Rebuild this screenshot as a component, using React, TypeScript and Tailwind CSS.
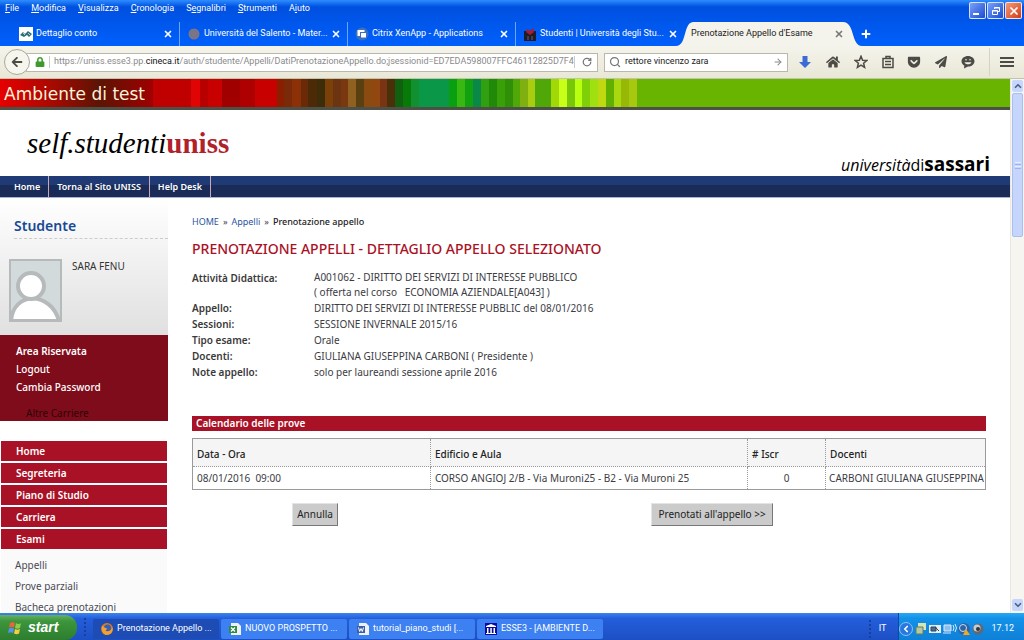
import { ArrowRight, ChevronDown, ChevronLeft, ChevronUp, Plus, RotateCw, Search, X } from "lucide-react";
import { FaArrowLeft, FaGetPocket, FaHome, FaLock, FaPaperPlane } from "react-icons/fa";
import type { ReactNode } from "react";

const MENUS = ["File", "Modifica", "Visualizza", "Cronologia", "Segnalibri", "Strumenti", "Aiuto"];
const ACCEL = [0, 0, 0, 0, 1, 0, 1];

// start x and colour of every band in the banner
const BANDS: [number, string][] = [
  [153, "#c00000"], [191, "#e00404"], [200, "#b80000"], [208, "#c80000"], [222, "#a00000"],
  [240, "#ae0000"], [255, "#c80000"], [277, "#8a1e00"], [284, "#7a2a08"], [292, "#8c3008"],
  [301, "#6a2a08"], [308, "#4c2a08"], [317, "#3c2c08"], [325, "#7a4008"], [333, "#6c3410"],
  [341, "#7a3810"], [348, "#8f6020"], [356, "#5a4010"], [364, "#8a4a10"], [372, "#904810"],
  [380, "#7a3414"], [387, "#4a3008"], [395, "#106010"], [403, "#087a08"], [411, "#109030"],
  [419, "#0a9848"], [449, "#08a010"], [457, "#38b810"], [465, "#10a010"], [473, "#0a8848"],
  [481, "#30a010"], [489, "#208a08"], [497, "#3aa008"], [505, "#2f9008"], [513, "#50a808"],
  [520, "#80b010"], [528, "#a8cc10"], [535, "#50a808"], [551, "#a0d808"], [559, "#c8ff18"],
  [567, "#78c808"], [575, "#b8ff10"], [582, "#80d008"], [590, "#a0e010"], [598, "#c0d810"],
  [606, "#60b000"], [614, "#a8d810"], [621, "#98b808"], [629, "#a8c810"], [637, "#69b400"],
];

const DETAILS: [string, ReactNode][] = [
  ["Appello:", "DIRITTO DEI SERVIZI DI INTERESSE PUBBLIC del 08/01/2016"],
  ["Sessioni:", "SESSIONE INVERNALE 2015/16"],
  ["Tipo esame:", "Orale"],
  ["Docenti:", "GIULIANA GIUSEPPINA CARBONI ( Presidente )"],
  ["Note appello:", "solo per laureandi sessione aprile 2016"],
];

function BankIcon() {
  return (
    <svg className="size-3.5 shrink-0" viewBox="0 0 14 14">
      <rect width="14" height="14" fill="#fff" />
      <path d="M1 8l3-3 2 2 3-3 4 3-3 3-2-2-3 2z" fill="#2d6f78" />
      <path d="M4 6l2 2M9 6l2 2" stroke="#b9d4cf" />
    </svg>
  );
}

function SalentoIcon() {
  return (
    <svg className="size-3.5 shrink-0" viewBox="0 0 14 14">
      <circle cx="7" cy="7" r="5.5" fill="#7f7480" />
      <circle cx="7" cy="7" r="3" fill="none" stroke="#6678a0" />
    </svg>
  );
}

function CitrixIcon() {
  return (
    <svg className="size-3.5 shrink-0" viewBox="0 0 14 14">
      <circle cx="7" cy="7" r="6.5" fill="#3c6fc0" />
      <rect x="2.5" y="3" width="7" height="6" fill="#fff" />
      <rect x="5.5" y="5.5" width="6" height="5.5" fill="#fff" stroke="#3c6fc0" />
    </svg>
  );
}

function UnissIcon() {
  return (
    <svg className="size-3.5 shrink-0" viewBox="0 0 14 14">
      <path d="M1 4h12v10H1z" fill="#1d1c2c" />
      <path d="M3 5l1-3 3 2 3-3 1 4-4 3z" fill="#a81c30" />
      <path d="M4 9h2v4H4zM8 9h2v4H8z" fill="#4a3a4a" />
    </svg>
  );
}

const TABS: { title: string; icon: ReactNode }[] = [
  { title: "Dettaglio conto", icon: <BankIcon /> },
  { title: "Università del Salento - Mater...", icon: <SalentoIcon /> },
  { title: "Citrix XenApp - Applications", icon: <CitrixIcon /> },
  { title: "Studenti | Università degli Stu...", icon: <UnissIcon /> },
];

function TitleBar() {
  return (
    <header className="flex h-[46px] flex-col bg-gradient-to-b from-[#2f8cff] via-[#0050e0] via-15% to-[#0060fc] font-[Roboto,sans-serif] text-white">
      <div className="flex h-[22px] shrink-0 items-start justify-between">
        <nav className="flex gap-3 pl-[5px] pt-0.5 text-[9px] leading-3">
          {MENUS.map((m, i) => (
            <button key={m} type="button">
              {m.slice(0, ACCEL[i])}
              <u>{m[ACCEL[i]]}</u>
              {m.slice(ACCEL[i] + 1)}
            </button>
          ))}
        </nav>
        <div className="flex gap-px pr-0.5 pt-0.5">
          <button type="button" aria-label="Riduci" className="flex size-[17px] items-end rounded-xs border border-white/80 bg-gradient-to-br from-[#7aa0f8] to-[#1c48d0] p-[3px]">
            <span className="h-0.5 w-1.5 bg-white" />
          </button>
          <button type="button" aria-label="Ripristina" className="flex size-[17px] items-center justify-center rounded-xs border border-white/80 bg-gradient-to-br from-[#7aa0f8] to-[#1c48d0]">
            <svg className="size-2.5" viewBox="0 0 10 10" fill="none" stroke="#fff">
              <path d="M3.5 3V1.5h5v4H7M1.500 4.500h5v4h-5zM1.500 5h5M3.500 2h5" />
            </svg>
          </button>
          <button type="button" aria-label="Chiudi" className="flex size-[17px] items-center justify-center rounded-xs border border-white/80 bg-gradient-to-br from-[#f09878] to-[#d03808]">
            <X className="size-3" strokeWidth={3.5} />
          </button>
        </div>
      </div>
      <div className="flex h-6 items-stretch pl-3">
        {TABS.map((t, i) => (
          <div key={t.title} className={`flex w-[168px] items-center gap-[3px] pl-[7px] pr-1.5 text-[9px] ${i < 3 ? "border-r border-[#6ba6ff]" : ""}`}>
            {t.icon}
            <span className="flex-1 whitespace-nowrap">{t.title}</span>
            <button type="button" aria-label="Chiudi scheda">
              <X className="size-2.5" strokeWidth={4} />
            </button>
          </div>
        ))}
        <div className="relative flex w-[170px] items-center pl-[7px] pr-2.5 text-[9px] text-[#222]">
          <svg className="absolute -left-2 top-0 h-full w-[186px]" viewBox="0 0 186 24" preserveAspectRatio="none">
            <path d="M0 24C11 24 7 1 17 0H167C179 0 175 24 186 24Z" fill="#f5f4ec" />
          </svg>
          <span className="relative flex-1 whitespace-nowrap">Prenotazione Appello d'Esame</span>
          <button type="button" aria-label="Chiudi scheda" className="relative text-[#777]">
            <X className="size-2.5" strokeWidth={4} />
          </button>
        </div>
        <button type="button" aria-label="Nuova scheda" className="pl-1.5">
          <Plus className="size-3" strokeWidth={4} />
        </button>
      </div>
    </header>
  );
}

function NavBar() {
  return (
    <div className="flex h-[33px] items-center border-b border-[#c4c2b0] bg-gradient-to-b from-[#f5f4ec] to-[#e9e7d6] font-[Roboto,sans-serif] text-[9px]">
      <button type="button" aria-label="Indietro" className="relative ml-1 flex size-[26px] shrink-0 items-center justify-center rounded-full border border-[#aaa99c] bg-[#f6f5ee] text-[#4c4b45]">
        <FaArrowLeft className="size-3" />
      </button>
      <div className="-ml-1 flex h-[19px] w-[572px] items-center border border-[#b9b8ab] bg-white pl-2">
        <FaLock className="size-2.5 shrink-0 text-[#3e9a2c]" />
        <span className="ml-1 h-3 border-l border-[#ccc]" />
        <div className="ml-1 flex-1 whitespace-nowrap text-[#8a8a8a]">
          https://uniss.esse3.pp.<span className="text-[#111]">cineca.it</span>
          /auth/studente/Appelli/DatiPrenotazioneAppello.do;jsessionid=ED7EDA598007FFC46112825D7F4
        </div>
        <button type="button" aria-label="Ricarica" className="flex h-3 w-[26px] shrink-0 items-center justify-center border-l border-[#ccc] text-[#777]">
          <RotateCw className="size-2.5" strokeWidth={3} />
        </button>
      </div>
      <label className="ml-1.5 flex h-[19px] w-[184px] items-center gap-1 border border-[#b9b8ab] bg-white px-1">
        <Search className="size-3 text-[#777]" strokeWidth={2.5} />
        <input aria-label="Cerca" defaultValue="rettore vincenzo zara" className="min-w-0 flex-1 text-[#222] outline-none" />
        <ArrowRight className="size-2.5 text-[#888]" strokeWidth={2.5} />
      </label>
      <div className="flex flex-1 items-center justify-between pl-2.5 pr-2.5 text-[#4c4b45]">
        <button type="button" aria-label="Download" className="text-[#3a6cd4]">
          <svg className="size-3.5" viewBox="0 0 14 14" fill="currentColor">
            <path d="M4.500 1h5v6H13l-6 6-6-6h3.500z" />
          </svg>
        </button>
        <button type="button" aria-label="Home"><FaHome className="size-3.5" /></button>
        <button type="button" aria-label="Preferiti">
          <svg className="size-3.5" viewBox="0 0 14 14" fill="none" stroke="currentColor" strokeWidth="1.500">
            <path d="M7 1.300l1.600 3.900 4.200.3-3.200 2.700 1 4.100L7 10.100l-3.600 2.200 1-4.100L1.200 5.500l4.200-.3z" />
          </svg>
        </button>
        <button type="button" aria-label="Segnalibri">
          <svg className="h-3.5 w-3" viewBox="0 0 12 14" fill="none" stroke="currentColor" strokeWidth="1.500">
            <path d="M1 3.500h10v9H1zM4 3.500v-2h4v2M3 6.500h6M3 9.500h6" />
          </svg>
        </button>
        <button type="button" aria-label="Pocket"><FaGetPocket className="size-3.5" /></button>
        <button type="button" aria-label="Condividi"><FaPaperPlane className="size-3" /></button>
        <button type="button" aria-label="Chat">
          <svg className="size-3.5" viewBox="0 0 14 14">
            <path d="M7 1c3.600 0 6.500 2.300 6.500 5.300S10.600 11.600 7 11.600L3 13.500l.3-2.800C1.600 9.700.5 8 .5 6.300.5 3.300 3.400 1 7 1z" fill="currentColor" />
            <path d="M3.500 7.200c1 2.700 6 2.700 7 0z" fill="#f0efe4" />
            <circle cx="5" cy="4.700" r=".8" fill="#f0efe4" />
            <circle cx="9" cy="4.700" r=".8" fill="#f0efe4" />
          </svg>
        </button>
        <button type="button" aria-label="Menu" className="border-l border-[#d5d3c4] py-2 pl-2.5">
          <svg className="h-3 w-3.5" viewBox="0 0 14 12" fill="currentColor">
            <path d="M0 1h14v2H0zM0 5h14v2H0zM0 9h14v2H0z" />
          </svg>
        </button>
      </div>
    </div>
  );
}

function Banner() {
  return (
    <div className="relative h-[31px] shrink-0 border-b-3 border-[#4c5046] bg-[#69b400]">
      <svg className="absolute left-0 top-0 h-7 w-[638px]" viewBox="0 0 638 28" preserveAspectRatio="none">
        <defs>
          <linearGradient id="glow">
            <stop offset="0" stopColor="#e60000" />
            <stop offset=".3" stopColor="#b00800" />
            <stop offset=".65" stopColor="#5c1404" />
            <stop offset="1" stopColor="#a00000" />
          </linearGradient>
        </defs>
        <rect width="153" height="28" fill="url(#glow)" />
        {BANDS.slice(0, -1).map(([x, c], i) => (
          <rect key={x} x={x} width={BANDS[i + 1][0] - x} height="28" fill={c} />
        ))}
      </svg>
      <p className="relative pl-1 font-[DejaVu_Sans,sans-serif] text-[17px] leading-[30px] text-[#fbf3dc]">Ambiente di test</p>
    </div>
  );
}

function Sidebar() {
  return (
    <aside className="w-[168px] shrink-0">
      <div className="h-[137px] bg-gradient-to-b from-white to-[#e0e0e0] pt-[18px]">
        <h2 className="ml-3.5 border-b border-dashed border-[#ccc] pb-0.5 text-[14px] font-semibold leading-5 text-[#174a94]">Studente</h2>
        <div className="flex gap-2.5 pl-[9px] pt-5">
          <svg className="h-[63px] w-[53px]" viewBox="0 0 53 63">
            <rect x="1" y="1" width="51" height="61" fill="#d3dadb" stroke="#b6baba" strokeWidth="2" />
            <path d="M2 62C4 32 42 32 50 62z" fill="#fff" stroke="#b6baba" strokeWidth="4" />
            <circle cx="22" cy="27" r="13" fill="#fff" stroke="#b6baba" strokeWidth="4" />
            <path d="M1 62h51" stroke="#b6baba" strokeWidth="2" />
          </svg>
          <p className="text-[10px] leading-[14px] text-[#333]">SARA FENU</p>
        </div>
      </div>
      <nav className="flex h-[86px] flex-col items-start bg-[#7f0c1b] pl-4 pt-[7px] text-[10px] font-medium leading-[18px] text-white">
        <a href="#area" className="font-semibold">Area Riservata</a>
        <a href="#logout">Logout</a>
        <a href="#password">Cambia Password</a>
        <a href="#carriere" className="pl-2.5 pt-2 font-normal text-[#2e0408]">Altre Carriere</a>
      </nav>
      <nav className="mt-5 flex flex-col gap-0.5 px-px text-[10px] font-semibold leading-5 text-white">
        {["Home", "Segreteria", "Piano di Studio", "Carriera", "Esami"].map((s) => (
          <a key={s} href="#sezione" className="bg-[#a91226] pl-[15px]">{s}</a>
        ))}
      </nav>
      <nav className="mx-px flex flex-col bg-[#fafafa] pl-3.5 pt-1.5 text-[10px] leading-[21px] text-[#4a4a55]">
        {["Appelli", "Prove parziali", "Bacheca prenotazioni"].map((s) => (
          <a key={s} href="#voce">{s}</a>
        ))}
      </nav>
    </aside>
  );
}

function Main() {
  return (
    <main className="min-w-0 flex-1 pl-6 pr-6 pt-4 text-[10px] text-[#3c3c44]">
      <nav className="flex gap-1 text-[9px] leading-4">
        <a href="#home" className="text-[#2a55a0]">HOME</a>
        <span>»</span>
        <a href="#appelli" className="text-[#2a55a0]">Appelli</a>
        <span>»</span>
        <span className="font-medium text-[#222]">Prenotazione appello</span>
      </nav>
      <h1 className="mt-[9px] text-[14px] font-medium leading-5 text-[#a91226]">PRENOTAZIONE APPELLI - DETTAGLIO APPELLO SELEZIONATO</h1>
      <dl className="mt-[11px] grid grid-cols-[122px_1fr] leading-4">
        <dt className="font-semibold text-[#3a3a3a]">Attività Didattica:</dt>
        <dd className="leading-[15px]">
          A001062 - DIRITTO DEI SERVIZI DI INTERESSE PUBBLICO
          <br />( offerta nel corso &nbsp; ECONOMIA AZIENDALE[A043] )
        </dd>
        {DETAILS.map(([k, v]) => [
          <dt key={k} className="font-semibold text-[#3a3a3a]">{k}</dt>,
          <dd key={k + "v"}>{v}</dd>,
        ])}
      </dl>
      <h2 className="mt-9 bg-[#a91226] pl-1 font-semibold leading-[15px] text-white">Calendario delle prove</h2>
      <table className="mt-[7px] w-full table-fixed border-collapse border border-[#9a9a9a] text-left">
        <colgroup>
          <col className="w-[30%]" />
          <col className="w-[40%]" />
          <col className="w-[78px]" />
          <col />
        </colgroup>
        <thead>
          <tr className="h-7 bg-[#f5f5f5] text-[#222]">
            {["Data - Ora", "Edificio e Aula", "# Iscr", "Docenti"].map((h) => (
              <th key={h} className="border border-dotted border-[#9a9a9a] px-1 pt-1 font-medium">{h}</th>
            ))}
          </tr>
        </thead>
        <tbody>
          <tr className="h-[23px] whitespace-nowrap">
            <td className="border border-dotted border-[#9a9a9a] px-1">08/01/2016 &nbsp;09:00</td>
            <td className="border border-dotted border-[#9a9a9a] px-1">CORSO ANGIOJ 2/B - Via Muroni25 - B2 - Via Muroni 25</td>
            <td className="border border-dotted border-[#9a9a9a] px-1 text-center">0</td>
            <td className="border border-dotted border-[#9a9a9a] pl-[3px]">CARBONI GIULIANA GIUSEPPINA</td>
          </tr>
        </tbody>
      </table>
      <div className="mt-[13px] grid grid-cols-[31%_69%] text-[#222]">
        <div className="flex justify-center">
          <button type="button" className="h-[23px] border border-t-[#e4e4e4] border-r-[#777] border-b-[#777] border-l-[#e4e4e4] bg-[#cbcbcb] px-1">Annulla</button>
        </div>
        <div className="flex justify-center">
          <button type="button" className="h-[23px] border border-t-[#e4e4e4] border-r-[#777] border-b-[#777] border-l-[#e4e4e4] bg-[#cbcbcb] px-1.5">Prenotati all'appello &gt;&gt;</button>
        </div>
      </div>
    </main>
  );
}

function Scrollbar() {
  return (
    <div className="flex w-3.5 shrink-0 flex-col border-l border-[#e8e8e0] bg-[#f6f5f0]">
      <div className="m-px flex h-3 shrink-0 items-center justify-center rounded-xs bg-[#c6d6fc] text-[#4d6185]">
        <ChevronUp className="size-2.5" strokeWidth={4} />
      </div>
      <div className="mx-px flex h-[144px] flex-col items-center justify-center gap-px rounded-xs border border-[#a9bff2] bg-[#c6d5fb]">
        <span className="h-px w-1.5 bg-[#e8effe]" />
        <span className="h-px w-1.5 bg-[#9db4ec]" />
        <span className="h-px w-1.5 bg-[#e8effe]" />
        <span className="h-px w-1.5 bg-[#9db4ec]" />
      </div>
      <div className="mx-px mt-auto mb-0.5 flex h-3 shrink-0 items-center justify-center rounded-xs bg-[#c6d6fc] text-[#4d6185]">
        <ChevronDown className="size-2.5" strokeWidth={4} />
      </div>
    </div>
  );
}

function FirefoxIcon() {
  return (
    <svg className="size-3 shrink-0" viewBox="0 0 12 12">
      <circle cx="6" cy="6" r="6" fill="#e8761c" />
      <circle cx="6.500" cy="5" r="3.500" fill="#2f62b8" />
      <path d="M1 3c2 0 2 2 4 2 1 0 1 2 0 2s0 2 3 1 3-3 3-4c2 5-2 8-5 8S0 9 1 3z" fill="#f2a030" />
    </svg>
  );
}

function DocIcon({ kind }: { kind: "excel" | "word" }) {
  return (
    <svg className="size-3 shrink-0" viewBox="0 0 12 12">
      <path d="M2 0h7l3 3v9H2z" fill="#eef2f6" />
      <rect y="3" width="8" height="7" fill={kind === "excel" ? "#2f8a45" : "#3a5ea8"} />
      {kind === "excel" ? (
        <path d="M2 4.500l4 4M6 4.500l-4 4" stroke="#fff" strokeWidth="1.300" />
      ) : (
        <path d="M1.500 4.500l1.200 4L4 5.500l1.300 3 1.200-4" fill="none" stroke="#fff" />
      )}
    </svg>
  );
}

function TempleIcon() {
  return (
    <svg className="size-3 shrink-0" viewBox="0 0 12 12">
      <rect width="12" height="12" fill="#0a0a9c" />
      <path d="M1 3l5-2 5 2v1H1zM2 5h1.500v5H2zM5.300 5h1.500v5H5.300zM8.500 5H10v5H8.500zM1 10h10v1H1z" fill="#fff" />
    </svg>
  );
}

function Taskbar() {
  const windows = [
    { title: "Prenotazione Appello ...", icon: <FirefoxIcon /> },
    { title: "NUOVO PROSPETTO ...", icon: <DocIcon kind="excel" /> },
    { title: "tutorial_piano_studi [...", icon: <DocIcon kind="word" /> },
    { title: "ESSE3 - [AMBIENTE D...", icon: <TempleIcon /> },
  ];
  return (
    <footer className="flex h-[27px] shrink-0 items-stretch bg-gradient-to-b from-[#3d84ec] via-[#245edb] via-20% to-[#1d4fc4] font-[Roboto,sans-serif] text-[9px] text-white">
      <button type="button" className="mt-0.5 flex w-[77px] items-center gap-1.5 rounded-r-xl bg-gradient-to-b from-[#63b163] via-[#3c963c] via-25% to-[#2d7d2e] pl-2 font-['Liberation_Sans',sans-serif] text-[14px] font-bold italic">
        <svg className="size-3.5" viewBox="0 0 14 14">
          <path d="M2 2c2-1 3-1 5 0L6 6.500c-2-1-3-1-5 0z" fill="#f0623a" />
          <path d="M8 2.300c2 1 3 1 5 0L12 7c-2 1-3 1-5 0z" fill="#8ccc50" />
          <path d="M1 7.500c2-1 3-1 5 0L5 12c-2-1-3-1-5 0z" fill="#5a90f0" />
          <path d="M7 8c2 1 3 1 5 0l-1 4.500c-2 1-3 1-5 0z" fill="#f8cc40" />
        </svg>
        start
      </button>
      <div className="flex w-4 items-center justify-center">
        <span className="h-[18px] border-l-2 border-dotted border-[#173f9c]" />
      </div>
      <div className="flex flex-1 gap-0.5 pt-1.5">
        {windows.map((w, i) => (
          <button key={w.title} type="button" className={`flex h-5 w-[126px] items-center gap-1 rounded-xs pl-2 ${i === 0 ? "bg-[#1c4cb4]" : "bg-[#3c80f2]"}`}>
            {w.icon}
            <span className="whitespace-nowrap">{w.title}</span>
          </button>
        ))}
      </div>
      <div className="flex items-center gap-2 pr-3 pt-1">
        <span className="h-[18px] border-l-2 border-dotted border-[#173f9c]" />
        IT
      </div>
      <div className="flex items-center gap-0.5 border-l border-[#0d4a9c] bg-gradient-to-b from-[#28a8f4] via-[#1391e8] via-20% to-[#0f80d8] pr-2.5 pt-1">
        <button type="button" aria-label="Mostra icone" className="flex size-3.5 items-center justify-center rounded-full border border-[#8cc4f8] bg-[#2878e0]">
          <ChevronLeft className="size-2.5" strokeWidth={4} />
        </button>
        <svg className="h-3.5 w-[70px]" viewBox="0 0 70 14">
          <path d="M3 1h8v7H3z" fill="#d8e4b8" />
          <path d="M1 5h7v7H1z" fill="#b8c8a0" stroke="#5c8060" />
          <rect x="14" y="3" width="12" height="8" fill="#e4ecf4" />
          <path d="M16 5h5v4h-5zM20 5l4 4" fill="#4c6c90" stroke="#345" />
          <path d="M29 3h7v6h-7z" fill="#8cc0ec" stroke="#dcecfc" />
          <path d="M28 11h8M38 3q2 3 0 6M40 2q3 4 0 8" stroke="#dcecfc" fill="none" />
          <circle cx="49" cy="7" r="6" fill="#2c64a8" />
          <circle cx="48" cy="6" r="3.500" fill="none" stroke="#c8dcf0" />
          <path d="M51 7l4 6h-7z" fill="#f4a820" />
          <circle cx="63" cy="7" r="5.500" fill="#606870" />
          <circle cx="62" cy="6" r="3.500" fill="#c8ccd0" />
          <circle cx="63" cy="7" r="2" fill="#30363c" />
        </svg>
        <span className="ml-1">17.12</span>
      </div>
    </footer>
  );
}

export default function App() {
  return (
    <div className="flex h-screen flex-col overflow-hidden bg-white font-['Noto_Sans',sans-serif]">
      <TitleBar />
      <NavBar />
      <div className="flex min-h-0 flex-1">
        <div className="min-w-0 flex-1 overflow-hidden">
          <Banner />
          <div className="flex h-[66px] justify-between pl-[27px] pr-5">
            <div className="pt-[13px] font-['Liberation_Serif',serif] text-[29px] leading-10 text-black">
              <i>self.studenti</i>
              <b className="text-[#b0222a]">uniss</b>
            </div>
            <div className="self-end font-['Open_Sans',sans-serif] text-[16px] leading-[22px] text-black">
              <i>università</i>di<b className="text-[19px]">sassari</b>
            </div>
          </div>
          <nav className="flex h-[22px] border-b border-[#a9b3cc] bg-gradient-to-b from-[#203a75] from-45% to-[#1a2b57] to-45% pl-1.5 text-[9px] font-semibold leading-[21px] text-white">
            {["Home", "Torna al Sito UNISS", "Help Desk"].map((s) => (
              <a key={s} href="#nav" className="border-r border-[#c9a9b4] px-2">{s}</a>
            ))}
          </nav>
          <div className="flex">
            <Sidebar />
            <Main />
          </div>
        </div>
        <Scrollbar />
      </div>
      <Taskbar />
    </div>
  );
}
